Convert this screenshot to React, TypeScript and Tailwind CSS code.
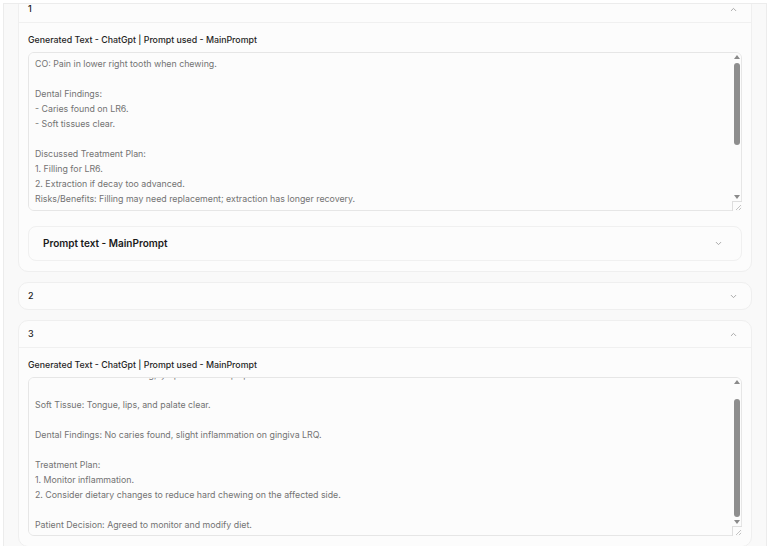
import { useEffect, useRef, useState } from "react";

type Entry = {
  id: number;
  open: boolean;
  text?: string;
  showPrompt?: boolean;
  scrollToEnd?: boolean;
};

const entries: Entry[] = [
  {
    id: 1,
    open: true,
    showPrompt: true,
    text: `CO: Pain in lower right tooth when chewing.

Dental Findings:
- Caries found on LR6.
- Soft tissues clear.

Discussed Treatment Plan:
1. Filling for LR6.
2. Extraction if decay too advanced.
Risks/Benefits: Filling may need replacement; extraction has longer recovery.

Patient Decision: Agreed to filling.

Follow-up: Review in 2 weeks.
Consent obtained verbally.
X-ray taken of LR quadrant.`,
  },
  { id: 2, open: false },
  {
    id: 3,
    open: true,
    scrollToEnd: true,
    text: `Extra Oral: No facial swelling, lymph nodes not palpable.

Soft Tissue: Tongue, lips, and palate clear.

Dental Findings: No caries found, slight inflammation on gingiva LRQ.

Treatment Plan:
1. Monitor inflammation.
2. Consider dietary changes to reduce hard chewing on the affected side.

Patient Decision: Agreed to monitor and modify diet.`,
  },
];

function ChevronUp() {
  return (
    <svg width="9" height="9" viewBox="0 0 24 24" fill="none" stroke="#a3a3a3" strokeWidth="2.5" strokeLinecap="round" strokeLinejoin="round">
      <path d="m18 15-6-6-6 6" />
    </svg>
  );
}

function ChevronDown() {
  return (
    <svg width="9" height="9" viewBox="0 0 24 24" fill="none" stroke="#a3a3a3" strokeWidth="2.5" strokeLinecap="round" strokeLinejoin="round">
      <path d="m6 9 6 6 6-6" />
    </svg>
  );
}

// track length between the two arrow buttons
const TRACK = 129;

function NoteBox({ text, scrollToEnd }: { text: string; scrollToEnd?: boolean }) {
  const ref = useRef<HTMLTextAreaElement>(null);
  const [thumb, setThumb] = useState({ top: 0, height: TRACK });

  useEffect(() => {
    const el = ref.current;
    if (!el) return;
    if (scrollToEnd) el.scrollTop = el.scrollHeight;

    const ratio = Math.min(1, el.clientHeight / el.scrollHeight);
    const height = Math.round(TRACK * ratio);
    const maxScroll = el.scrollHeight - el.clientHeight;
    const top = maxScroll > 0 ? Math.round(((TRACK - height) * el.scrollTop) / maxScroll) : 0;
    setThumb({ top, height });
  }, [scrollToEnd]);

  return (
    <div className="relative">
      <textarea
        ref={ref}
        readOnly
        defaultValue={text}
        className="block h-[159px] w-full resize-none rounded-[6px] border border-[#e6e6e6] bg-[#fcfcfc] py-[3px] pl-[6px] pr-[16px] text-[8.8px] leading-[15px] text-[#737373] outline-none [scrollbar-width:none]"
      />
      {/* fake classic scrollbar */}
      <div className="pointer-events-none absolute bottom-0 right-0 top-0 flex w-[10px] flex-col items-center">
        <div className="mt-[3px] h-0 w-0 border-x-[3px] border-b-[4px] border-x-transparent border-b-[#8a8a8a]" />
        <div className="relative mt-[4px] h-[129px] w-full">
          <div
            className="absolute left-[2px] w-[6px] rounded-full bg-[#8e8e8e]"
            style={{ top: thumb.top, height: thumb.height }}
          />
        </div>
        <div className="mt-[3px] h-0 w-0 border-x-[3px] border-t-[4px] border-x-transparent border-t-[#8a8a8a]" />
        <div className="mt-auto flex h-[10px] w-full items-end justify-end rounded-br-[6px] border-l border-t border-[#dedede] bg-[#fcfcfc]">
          <svg width="8" height="8" viewBox="0 0 8 8" stroke="#b5b5b5" strokeWidth="0.8">
            <path d="M7 2 2 7M7 5 5 7" />
          </svg>
        </div>
      </div>
    </div>
  );
}

function EntryCard({ entry }: { entry: Entry }) {
  return (
    <div className="rounded-[10px] border border-[#efefef] bg-[#fcfcfc]">
      <div
        className={`flex items-center justify-between pl-[9px] pr-[13px] ${
          entry.open ? "h-[27px] border-b border-[#f0f0f0]" : "h-[26px]"
        }`}
      >
        <span className="text-[9px] font-medium text-[#222]">{entry.id}</span>
        {entry.open ? <ChevronUp /> : <ChevronDown />}
      </div>
      {entry.open && entry.text && (
        <div className="px-[9px] pb-[10px] pt-[10px]">
          <p className="mb-[5px] text-[8.8px] font-medium leading-[14px] text-[#1f1f1f]">
            Generated Text - ChatGpt | Prompt used - MainPrompt
          </p>
          <NoteBox text={entry.text} scrollToEnd={entry.scrollToEnd} />
          {entry.showPrompt && (
            <div className="mt-[15px] flex h-[35px] items-center justify-between rounded-[8px] border border-[#f0f0f0] bg-[#fcfcfc] pl-[14px] pr-[18px]">
              <span className="text-[10px] font-semibold text-[#1a1a1a]">Prompt text - MainPrompt</span>
              <ChevronDown />
            </div>
          )}
        </div>
      )}
    </div>
  );
}

export default function App() {
  return (
    <div className="h-[546px] w-[768px] overflow-hidden bg-white pl-[3px] pr-[1px] pt-[3px] font-['Inter','Noto_Sans',sans-serif]">
      <div className="h-full overflow-hidden border-l border-r border-t border-[#ececec] bg-[#f9f9f9] px-[14px]">
        <div className="-mt-[9px] flex flex-col gap-[10px]">
          {entries.map((entry) => (
            <EntryCard key={entry.id} entry={entry} />
          ))}
        </div>
      </div>
    </div>
  );
}
